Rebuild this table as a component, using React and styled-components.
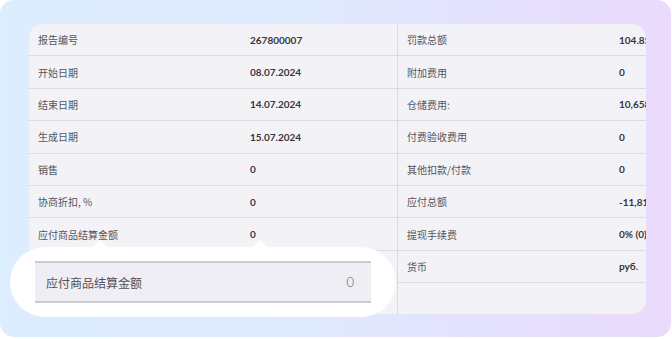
import React from "react";
import styled, { createGlobalStyle } from "styled-components";

const Global = createGlobalStyle`
  html, body { margin: 0; padding: 0; background: #ffffff; }
  body { font-family: "Lato", "Noto Sans CJK SC", sans-serif; }
`;

const Frame = styled.div`
  position: relative;
  box-sizing: border-box;
  width: 671px;
  height: 337px;
  border-radius: 14px;
  padding: 24px 25px 23px 29px;
  background: linear-gradient(90deg, #dcedfd 0%, #dfeafd 45%, #e4e2fd 70%, #eadafc 100%);
`;

const Card = styled.div`
  height: 100%;
  border-radius: 14px;
  background: #f3f2f7;
  overflow: hidden;
`;

const Table = styled.div`
  display: grid;
  grid-template-columns: 369px 369px;
  height: 100%;
`;

const Column = styled.div`
  display: flex;
  flex-direction: column;
  border-right: ${(p) => (p.$divider ? "1px solid #dcdbe1" : "none")};
`;

const Row = styled.div`
  box-sizing: border-box;
  height: 32.4px;
  flex: none;
  display: grid;
  grid-template-columns: 212px 1fr;
  align-items: center;
  padding-left: 9px;
  border-bottom: 1px solid #dcdbe1;
  white-space: nowrap;
`;

const Label = styled.span`
  font-family: "Noto Sans CJK SC", "Lato", sans-serif;
  font-size: 10px;
  color: #55555b;
`;

const Value = styled.span`
  font-family: "Lato", "Noto Sans CJK SC", sans-serif;
  font-size: 10px;
  font-weight: 700;
  color: #36363b;
`;

const Bubble = styled.div`
  position: absolute;
  left: 10px;
  top: 247px;
  width: 386px;
  height: 70px;
  box-sizing: border-box;
  padding: 14px 25px;
  background: #ffffff;
  border-radius: 35px;
`;

const Pointer = styled.span`
  position: absolute;
  top: -7px;
  left: ${(p) => p.$x}px;
  width: 0;
  height: 0;
  border-left: 8px solid transparent;
  border-right: 8px solid transparent;
  border-bottom: 8px solid #ffffff;
`;

const Preview = styled.div`
  box-sizing: border-box;
  height: 42px;
  display: flex;
  align-items: center;
  justify-content: space-between;
  padding: 0 17px 0 11px;
  background: #efeef4;
  border-top: 2px solid #cdccd3;
  border-bottom: 2px solid #cdccd3;
  font-family: "Noto Sans CJK SC", sans-serif;
  font-size: 12px;
  font-weight: 400;
  color: #505056;
`;

const PreviewNum = styled.span`
  font-family: "Lato", sans-serif;
  font-size: 13px;
  font-weight: 300;
  color: #5e5e64;
`;

const left = [
  ["报告编号", "267800007"],
  ["开始日期", "08.07.2024"],
  ["结束日期", "14.07.2024"],
  ["生成日期", "15.07.2024"],
  ["销售", "0"],
  ["协商折扣, %", "0"],
  ["应付商品结算金额", "0"],
  ["", ""],
];

const right = [
  ["罚款总额", "104.85"],
  ["附加费用", "0"],
  ["仓储费用:", "10,658.1"],
  ["付费验收费用", "0"],
  ["其他扣款/付款", "0"],
  ["应付总额", "-11,815"],
  ["提现手续费", "0% (0)"],
  ["货币", "руб."],
];

export default function App() {
  return (
    <>
      <Global />
      <Frame>
        <Card>
          <Table>
            <Column $divider>
              {left.map(([l, v], i) => (
                <Row key={i}>
                  <Label>{l}</Label>
                  <Value>{v}</Value>
                </Row>
              ))}
            </Column>
            <Column>
              {right.map(([l, v], i) => (
                <Row key={i}>
                  <Label>{l}</Label>
                  <Value>{v}</Value>
                </Row>
              ))}
            </Column>
          </Table>
        </Card>
        <Bubble>
          <Pointer $x={82} />
          <Pointer $x={242} />
          <Preview>
            <span>应付商品结算金额</span>
            <PreviewNum>0</PreviewNum>
          </Preview>
        </Bubble>
      </Frame>
    </>
  );
}
